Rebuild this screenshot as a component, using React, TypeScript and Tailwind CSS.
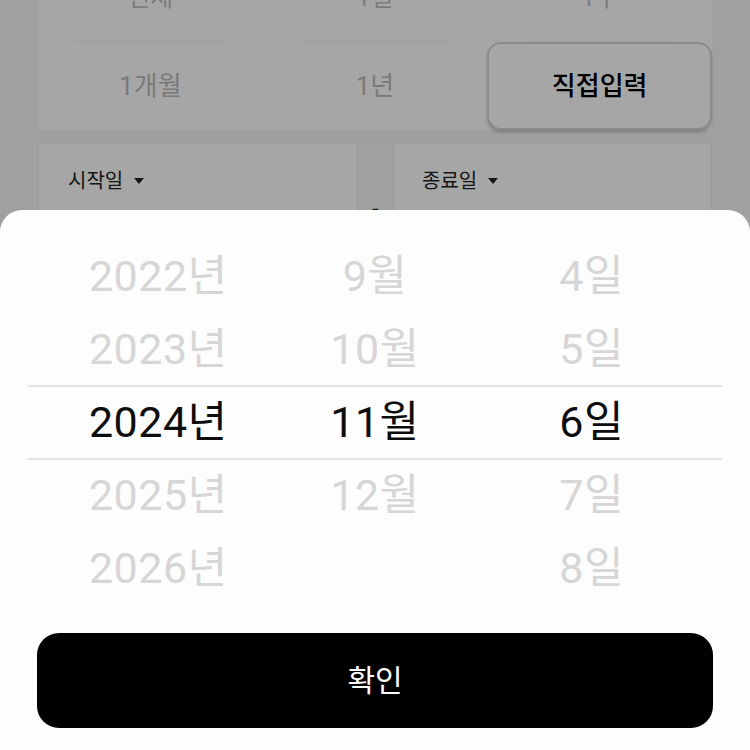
import React from "react";

const FONT = { fontFamily: "Roboto, 'Noto Sans CJK KR', 'Noto Sans', sans-serif" };

const years = ["2022년", "2023년", "2024년", "2025년", "2026년"];
const months = ["9월", "10월", "11월", "12월", ""];
const days = ["4일", "5일", "6일", "7일", "8일"];

function Caret() {
  return (
    <svg width="12" height="8" viewBox="0 0 12 8" className="ml-[10px]">
      <path d="M1 1 L11 1 L6 7 Z" fill="#222" />
    </svg>
  );
}

export default function App() {
  return (
    <div className="relative h-[750px] w-[750px] overflow-hidden bg-[#f6f6f6]" style={FONT}>
      {/* underlying page */}
      <div className="mt-[-45px] px-[38px]">
        <div className="grid grid-cols-3 bg-white">
          {["전체", "1일", "1주"].map((t) => (
            <div key={t} className="flex h-[87px] flex-col">
              <div className="flex flex-1 items-center justify-center text-[25px] text-[#bfbfbf]">{t}</div>
              <div className="mx-[36px] h-px bg-[#f1f1f1]" />
            </div>
          ))}
          <div className="flex h-[88px] items-center justify-center text-[26px] text-[#bcbcbc]">1개월</div>
          <div className="flex h-[88px] items-center justify-center text-[26px] text-[#bcbcbc]">1년</div>
          <div className="flex h-[88px] items-center justify-center rounded-[14px] border-2 border-[#d6d6d6] bg-white text-[26px] font-medium text-black shadow-[0_3px_3px_rgba(0,0,0,0.18)]">
            직접입력
          </div>
        </div>
        <div className="mt-[13px] h-px bg-[#f0f0f0]" />
        <div className="flex h-[200px]">
          <div className="flex flex-1 items-start border-l border-r border-[#ececec] bg-white pl-[29px] pt-[22px]">
            <div className="flex items-center text-[20px] text-[#222]">
              시작일
              <Caret />
            </div>
          </div>
          <div className="flex w-[35px] justify-center pt-[50px] text-[20px] font-bold text-[#222]">-</div>
          <div className="flex flex-1 items-start border-l border-r border-[#ececec] bg-white pl-[28px] pt-[22px]">
            <div className="flex items-center text-[20px] text-[#222]">
              종료일
              <Caret />
            </div>
          </div>
        </div>
      </div>

      {/* dim overlay */}
      <div className="absolute inset-0 bg-black/35" />

      {/* bottom sheet */}
      <div className="absolute bottom-0 left-0 right-0 top-[210px] rounded-t-[22px] bg-[#fdfdfd]">
        <div className="relative pt-[30px]">
          <div className="absolute left-[28px] right-[28px] top-[175px] h-[2px] bg-[#e4e4e4]" />
          <div className="absolute left-[28px] right-[28px] top-[248px] h-[2px] bg-[#e4e4e4]" />
          <div className="grid grid-cols-3 px-[50px]">
            {[years, months, days].map((col, ci) => (
              <div key={ci} className="flex flex-col">
                {col.map((v, i) => (
                  <div
                    key={i}
                    className={
                      "flex h-[73px] items-center justify-center text-[43px] tracking-[0.5px] " +
                      (i === 2 ? "text-[#0d0d0d]" : "text-[#d6d6d6]")
                    }
                  >
                    {v}
                  </div>
                ))}
              </div>
            ))}
          </div>
        </div>
        <div className="mx-[37px] mt-[28px] flex h-[95px] items-center justify-center rounded-[22px] bg-black text-[30px] text-white">
          확인
        </div>
      </div>
    </div>
  );
}
